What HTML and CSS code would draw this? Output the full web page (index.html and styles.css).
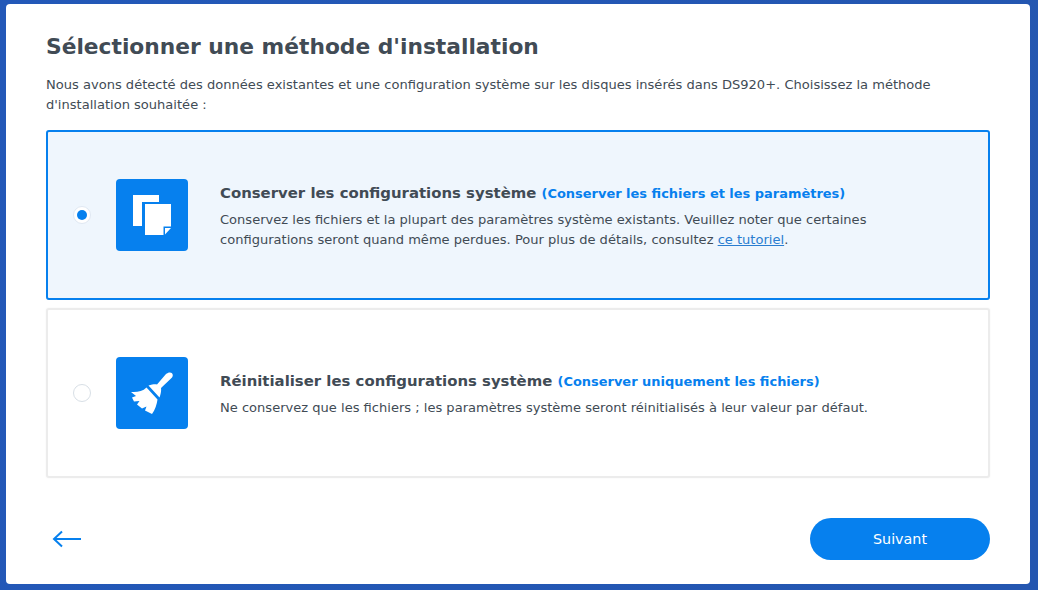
FILE: index.html
```html
<!DOCTYPE html>
<html lang="fr">
<head>
<meta charset="utf-8">
<title>Sélectionner une méthode d'installation</title>
<link rel="stylesheet" href="styles.css">
</head>
<body>
<main class="panel">
  <h1 class="title">Sélectionner une méthode d'installation</h1>
  <p class="intro">Nous avons détecté des données existantes et une configuration système sur les disques insérés dans DS920+. Choisissez la méthode d'installation souhaitée :</p>
  <div class="options">
    <section class="option selected">
      <span class="radio checked"></span>
      <span class="tile">
        <svg width="38" height="40" viewBox="0 0 38 40"><path fill="#fff" d="M0 0h26v7H9v24H0z"/><path fill="#fff" d="M12 9h26v22.500h-7.500V40H12z"/><path fill="#fff" d="M32 33h6l-6 6.500z"/></svg>
      </span>
      <div class="copy">
        <h2 class="opt-title">Conserver les configurations système <span class="accent">(Conserver les fichiers et les paramètres)</span></h2>
        <p class="opt-text">Conservez les fichiers et la plupart des paramètres système existants. Veuillez noter que certaines<br>configurations seront quand même perdues. Pour plus de détails, consultez <a class="link" href="#">ce tutoriel</a>.</p>
      </div>
    </section>
    <section class="option">
      <span class="radio"></span>
      <span class="tile">
        <svg width="42" height="42" viewBox="0 0 42 42"><path fill="#fff" d="M17.500 13.500C21 12.500 24 12 26 12.500L35 2C37 0 40 0 41 1.200 42.300 2.600 42 4.800 40 6.500L30 16C30.500 19 29.500 22.500 28.500 25.500Z"/><path fill="#fff" d="M15.500 15.500 26.500 27.500C26 32 24 38 21 42L14 38.500 15.500 34.500 11 36.500 6 32.500 8.500 29 3 29.500 1 25.500 5 24 0 20C6 20.500 11.500 19.500 15.500 15.500Z"/></svg>
      </span>
      <div class="copy">
        <h2 class="opt-title">Réinitialiser les configurations système <span class="accent">(Conserver uniquement les fichiers)</span></h2>
        <p class="opt-text">Ne conservez que les fichiers ; les paramètres système seront réinitialisés à leur valeur par défaut.</p>
      </div>
    </section>
  </div>
  <footer class="actions">
    <button class="back" type="button" aria-label="Retour">
      <svg width="30" height="18" viewBox="0 0 30 18"><path fill="none" stroke="#0680ee" stroke-width="2" d="M29 9H2M10 1.500 2 9l8 7.500"/></svg>
    </button>
    <button class="next" type="button">Suivant</button>
  </footer>
</main>
</body>
</html>
```
FILE: styles.css
```css
* { box-sizing: border-box; }
html, body { height: 100%; }
body {
  margin: 0;
  padding: 4px 8px 6px 6px;
  background: linear-gradient(100deg, #2358b8, #2456b0);
  font-family: "DejaVu Sans", Verdana, sans-serif;
  color: #414b55;
  overflow: hidden;
}
.panel {
  height: 580px;
  background: #fff;
  border-radius: 4px;
  padding: 29px 40px 0;
}
.title {
  margin: 0;
  font-size: 21.76px;
  line-height: 27px;
  font-weight: 700;
  color: #414b55;
}
.intro {
  margin: 15px 0 0;
  font-size: 13.05px;
  line-height: 20px;
}
.options { margin-top: 15px; display: flex; flex-direction: column; gap: 8px; }
.option {
  height: 170px;
  display: flex;
  align-items: center;
  background: #fff;
  border: 2px solid #ececec;
  border-radius: 3px;
  box-shadow: 0 0 2px rgba(0, 0, 0, 0.06);
  padding-left: 25px;
}
.option.selected { background: #eff6fd; border-color: #0680ee; box-shadow: none; }
.radio {
  width: 18px;
  height: 18px;
  border-radius: 50%;
  border: 1px solid #d8dfe6;
  background: #fff;
  flex: none;
  display: flex;
  align-items: center;
  justify-content: center;
}
.radio.checked::after {
  content: "";
  width: 10px;
  height: 10px;
  border-radius: 50%;
  background: #0680ee;
}
.radio.checked { border-color: #e0e8f2; }
.tile {
  width: 72px;
  height: 72px;
  margin-left: 25px;
  background: #0680ee;
  border-radius: 4px;
  flex: none;
  display: flex;
  align-items: center;
  justify-content: center;
}
.copy { margin-left: 32px; padding-top: 3px; }
.opt-title {
  margin: 0;
  font-size: 14.9px;
  line-height: 20px;
  font-weight: 700;
  color: #414b55;
}
.accent { font-size: 12.96px; color: #0680ee; }
.opt-text { margin: 6px 0 0; font-size: 13.05px; line-height: 20.500px; }
.link { color: #2a7dd0; text-decoration: underline; }
.actions {
  margin-top: 40px;
  display: flex;
  justify-content: space-between;
  align-items: center;
}
.back { background: none; border: 0; padding: 0 0 0 6px; display: flex; }
.next {
  width: 180px;
  height: 42px;
  border: 0;
  border-radius: 21px;
  background: #0680ee;
  color: #fff;
  font-family: inherit;
  font-size: 14.3px;
}
```
